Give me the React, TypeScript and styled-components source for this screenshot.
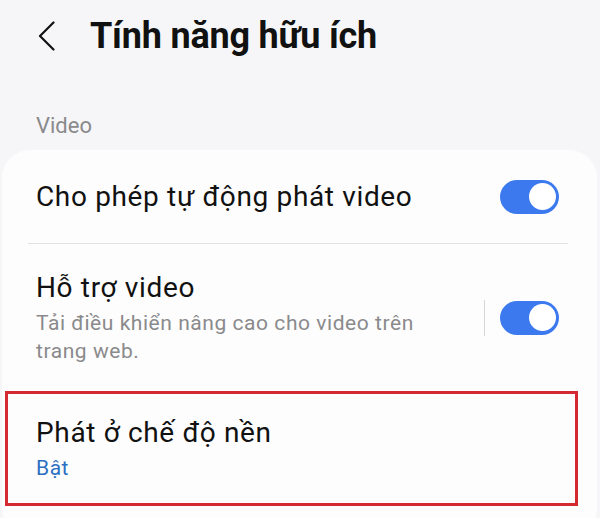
import React from "react";
import styled, { createGlobalStyle } from "styled-components";

const Global = createGlobalStyle`
  html, body { margin: 0; padding: 0; background: #f6f6f8; }
  body { font-family: Roboto, "Noto Sans", "Liberation Sans", sans-serif; color: #111; }
  * { box-sizing: border-box; }
`;

const Page = styled.div`
  width: 600px;
  height: 518px;
  overflow: hidden;
  background: #f6f6f8;
`;

const Header = styled.header`
  display: flex;
  align-items: center;
  height: 71px;
  padding-left: 38px;
  gap: 35px;
`;

const BackButton = styled.button`
  display: flex;
  align-items: center;
  justify-content: center;
  width: 17px;
  height: 30px;
  padding: 0;
  border: 0;
  background: none;
  color: #111;
`;

const Title = styled.h1`
  margin: 0;
  font-size: 36px;
  font-weight: 700;
  letter-spacing: -0.2px;
  color: #111;
`;

const SectionLabel = styled.div`
  padding: 42px 0 0 36px;
  height: 79px;
  font-size: 22px;
  color: #8a8a8c;
`;

const Card = styled.section`
  margin: 0 3px 0 2px;
  background: #fdfdfd;
  border-radius: 28px;
  padding-bottom: 30px;
`;

const Row = styled.div<{ $h: number }>`
  display: flex;
  align-items: center;
  min-height: ${(p) => p.$h}px;
  padding: 0 38px 0 34px;
`;

const RowText = styled.div`
  flex: 1;
  display: flex;
  flex-direction: column;
`;

const RowTitle = styled.div`
  font-size: 28px;
  line-height: 36px;
  letter-spacing: 0.65px;
  color: #111;
`;

const RowSub = styled.div<{ $accent?: boolean }>`
  margin-top: 3px;
  font-size: 21px;
  line-height: 28px;
  letter-spacing: 0.55px;
  color: ${(p) => (p.$accent ? "#2b6fc2" : "#8a8a8c")};
  max-width: 420px;
`;

const Divider = styled.div`
  height: 1px;
  background: #e2e2e4;
  margin: 0 29px 0 26px;
`;

const VSep = styled.div`
  width: 1px;
  height: 36px;
  background: #d6d6d8;
  margin-right: 15px;
`;

const Toggle = styled.div`
  position: relative;
  width: 59px;
  height: 34px;
  border-radius: 17px;
  background: #3c79ef;
  flex-shrink: 0;
`;

const Knob = styled.div`
  position: absolute;
  top: 3.5px;
  right: 3px;
  width: 27px;
  height: 27px;
  border-radius: 50%;
  background: #ffffff;
`;

const Highlight = styled.div`
  margin: 0 19px 0 3px;
  border: 3px solid #d52a31;
  height: 115px;
  display: flex;
  align-items: center;
  padding: 0 0 0 28px;
`;

const Chevron = () => (
  <svg width="17" height="30" viewBox="0 0 17 30" fill="none">
    <path d="M15.5 1.5 L2 15 L15.5 28.5" stroke="#111" strokeWidth="2.2" strokeLinecap="round" strokeLinejoin="round" />
  </svg>
);

export default function App() {
  return (
    <Page>
      <Global />
      <Header>
        <BackButton aria-label="Quay lại">
          <Chevron />
        </BackButton>
        <Title>Tính năng hữu ích</Title>
      </Header>
      <SectionLabel>Video</SectionLabel>
      <Card>
        <Row $h={93}>
          <RowText>
            <RowTitle>Cho phép tự động phát video</RowTitle>
          </RowText>
          <Toggle><Knob /></Toggle>
        </Row>
        <Divider />
        <Row $h={147}>
          <RowText>
            <RowTitle>Hỗ trợ video</RowTitle>
            <RowSub>Tải điều khiển nâng cao cho video trên trang web.</RowSub>
          </RowText>
          <VSep />
          <Toggle><Knob /></Toggle>
        </Row>
        <Highlight>
          <RowText>
            <RowTitle>Phát ở chế độ nền</RowTitle>
            <RowSub $accent>Bật</RowSub>
          </RowText>
        </Highlight>
      </Card>
    </Page>
  );
}
